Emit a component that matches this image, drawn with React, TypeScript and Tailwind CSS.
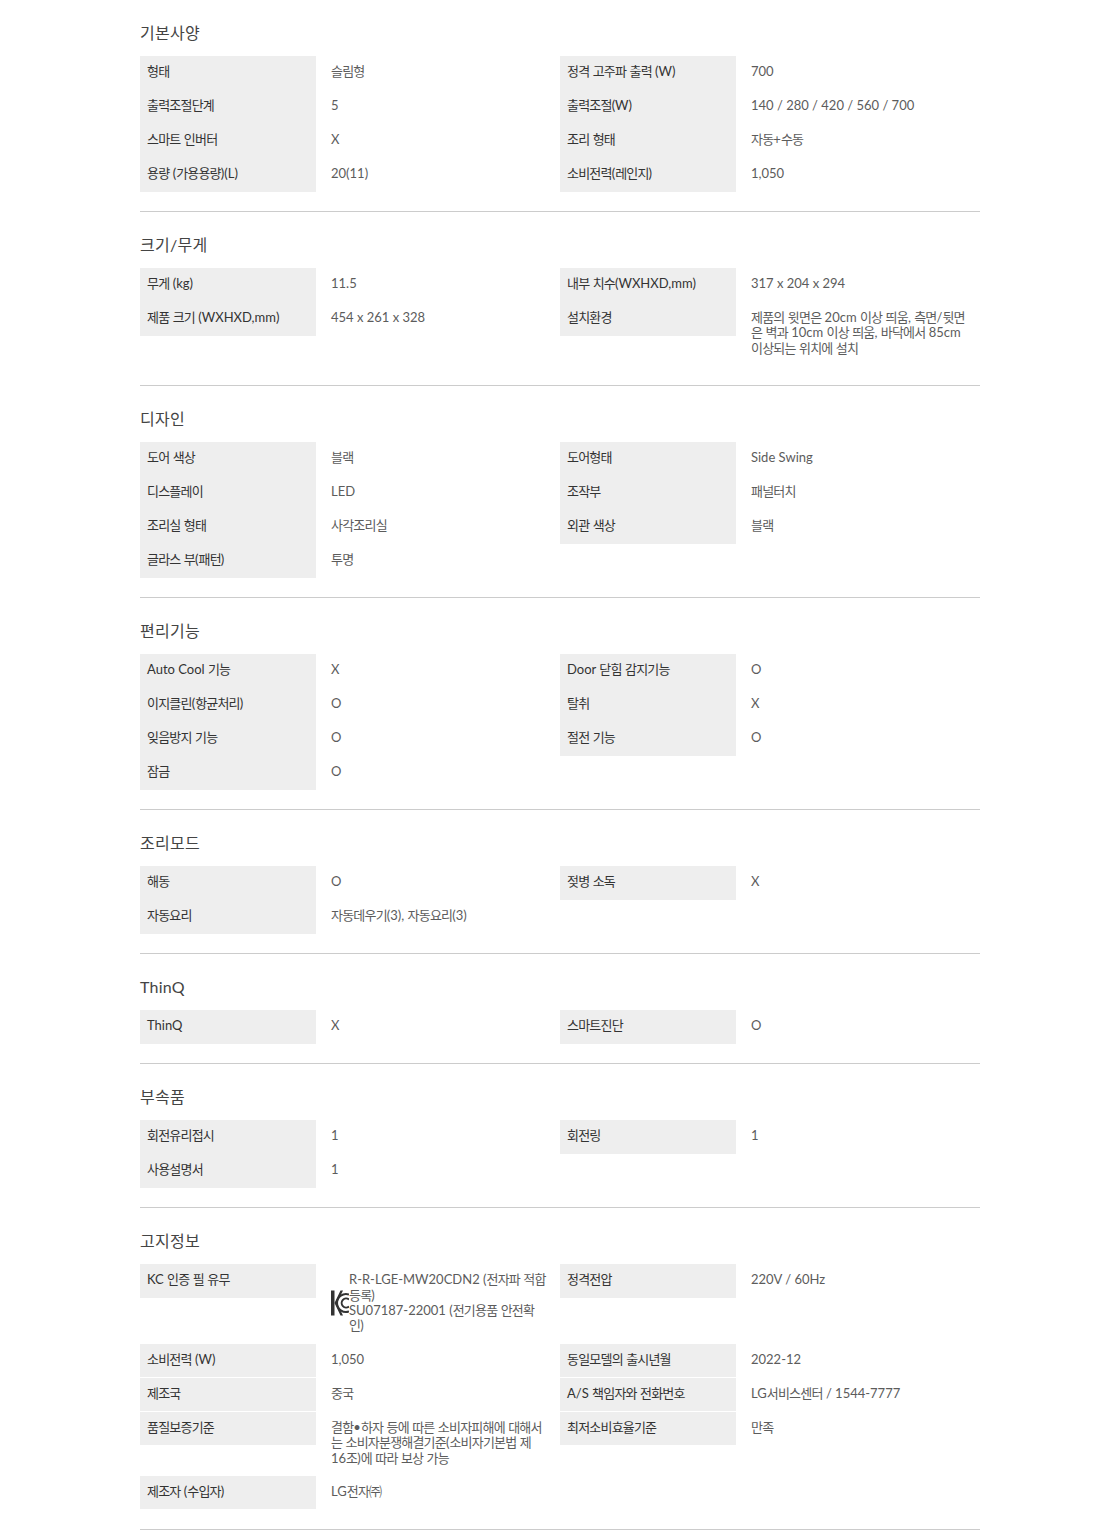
import React from "react";

type Item = { k: string; v: string | string[]; kc?: boolean };
type Section = { title: string; rows: Item[][]; split?: boolean };

const sections: Section[] = [
  { title: "기본사양", rows: [
    [{ k: "형태", v: "슬림형" }, { k: "정격 고주파 출력 (W)", v: "700" }],
    [{ k: "출력조절단계", v: "5" }, { k: "출력조절(W)", v: "140 / 280 / 420 / 560 / 700" }],
    [{ k: "스마트 인버터", v: "X" }, { k: "조리 형태", v: "자동+수동" }],
    [{ k: "용량 (가용용량)(L)", v: "20(11)" }, { k: "소비전력(레인지)", v: "1,050" }],
  ] },
  { title: "크기/무게", rows: [
    [{ k: "무게 (kg)", v: "11.5" }, { k: "내부 치수(WXHXD,mm)", v: "317 x 204 x 294" }],
    [{ k: "제품 크기 (WXHXD,mm)", v: "454 x 261 x 328" }, { k: "설치환경", v: ["제품의 윗면은 20cm 이상 띄움, 측면/뒷면", "은 벽과 10cm 이상 띄움, 바닥에서 85cm", "이상되는 위치에 설치"] }],
  ] },
  { title: "디자인", rows: [
    [{ k: "도어 색상", v: "블랙" }, { k: "도어형태", v: "Side Swing" }],
    [{ k: "디스플레이", v: "LED" }, { k: "조작부", v: "패널터치" }],
    [{ k: "조리실 형태", v: "사각조리실" }, { k: "외관 색상", v: "블랙" }],
    [{ k: "글라스 부(패턴)", v: "투명" }],
  ] },
  { title: "편리기능", rows: [
    [{ k: "Auto Cool 기능", v: "X" }, { k: "Door 닫힘 감지기능", v: "O" }],
    [{ k: "이지클린(항균처리)", v: "O" }, { k: "탈취", v: "X" }],
    [{ k: "잊음방지 기능", v: "O" }, { k: "절전 기능", v: "O" }],
    [{ k: "잠금", v: "O" }],
  ] },
  { title: "조리모드", rows: [
    [{ k: "해동", v: "O" }, { k: "젖병 소독", v: "X" }],
    [{ k: "자동요리", v: "자동데우기(3), 자동요리(3)" }],
  ] },
  { title: "ThinQ", rows: [[{ k: "ThinQ", v: "X" }, { k: "스마트진단", v: "O" }]] },
  { title: "부속품", rows: [
    [{ k: "회전유리접시", v: "1" }, { k: "회전링", v: "1" }],
    [{ k: "사용설명서", v: "1" }],
  ] },
  { title: "고지정보", split: true, rows: [
    [{ k: "KC 인증 필 유무", v: ["R-R-LGE-MW20CDN2 (전자파 적합", "등록)", "SU07187-22001 (전기용품 안전확", "인)"], kc: true }, { k: "정격전압", v: "220V / 60Hz" }],
    [{ k: "소비전력 (W)", v: "1,050" }, { k: "동일모델의 출시년월", v: "2022-12" }],
    [{ k: "제조국", v: "중국" }, { k: "A/S 책임자와 전화번호", v: "LG서비스센터 / 1544-7777" }],
    [{ k: "품질보증기준", v: ["결함•하자 등에 따른 소비자피해에 대해서", "는 소비자분쟁해결기준(소비자기본법 제", "16조)에 따라 보상 가능"] }, { k: "최저소비효율기준", v: "만족" }],
    [{ k: "제조자 (수입자)", v: "LG전자㈜" }],
  ] },
];

function KcMark() {
  return (
    <svg width="18" height="26" viewBox="0 0 18 26" className="shrink-0">
      <rect x="0" y="0.5" width="3.5" height="25" fill="#333" />
      <path d="M3.5 13 L9.5 0.5 H12 L6 13 L12 25.5 H9.5 Z" fill="#333" />
      <path d="M18 4.5 A9 9 0 1 0 18 21.5" fill="none" stroke="#333" strokeWidth="2" />
      <path d="M18 9.5 A4.5 4.5 0 1 0 18 16.5" fill="none" stroke="#333" strokeWidth="2" />
    </svg>
  );
}

function Txt({ s }: { s: string }) {
  const parts = s.split(/([\uAC00-\uD7A3\u3200-\u32FF]+)/);
  return (
    <>
      {parts.map((p, i) =>
        i % 2 === 1 ? (
          <span key={i} className="tracking-[-0.8px]">{p}</span>
        ) : (
          <span key={i}>{p}</span>
        )
      )}
    </>
  );
}

function Lines({ v }: { v: string | string[] }) {
  const lines = Array.isArray(v) ? v : [v];
  return (
    <div>
      {lines.map((l) => (
        <div key={l} className="whitespace-nowrap"><Txt s={l} /></div>
      ))}
    </div>
  );
}

function Cell({ item, short }: { item: Item; short: boolean }) {
  return (
    <div className="flex w-[420px] items-start">
      <div className={short ? "h-[33px] w-[176px] shrink-0 bg-[#eeeeee] px-[7px] pt-[8px] leading-[15.4px] text-[#333333]" : "h-[34px] w-[176px] shrink-0 bg-[#eeeeee] px-[7px] pt-[8px] leading-[15.4px] text-[#333333]"}>
        <Txt s={item.k} />
      </div>
      <div className={item.kc ? "flex items-center pl-[15px] pt-[8px] pb-[10px] leading-[15.4px] text-[#5c5c5c]" : "pl-[15px] pt-[8px] pb-[10px] leading-[15.4px] text-[#5c5c5c]"}>
        {item.kc && <KcMark />}
        <Lines v={item.v} />
      </div>
    </div>
  );
}

export default function App() {
  return (
    <div className="mx-auto w-[840px] text-[13px] [font-family:'Lato','Noto_Sans_CJK_KR',sans-serif]">
      {sections.map((s) => (
        <section key={s.title} className="border-b border-[#cccccc] pb-[19px]">
          <h2 className="flex h-[56px] items-center pt-[10px] text-[16px] font-normal tracking-[0.25px] text-[#444444]">{s.title}</h2>
          {s.rows.map((r, i) => (
            <div key={i} className="flex min-h-[34px]">
              {r.map((it) => (
                <Cell key={it.k} item={it} short={!!s.split && i > 0} />
              ))}
            </div>
          ))}
        </section>
      ))}
    </div>
  );
}
